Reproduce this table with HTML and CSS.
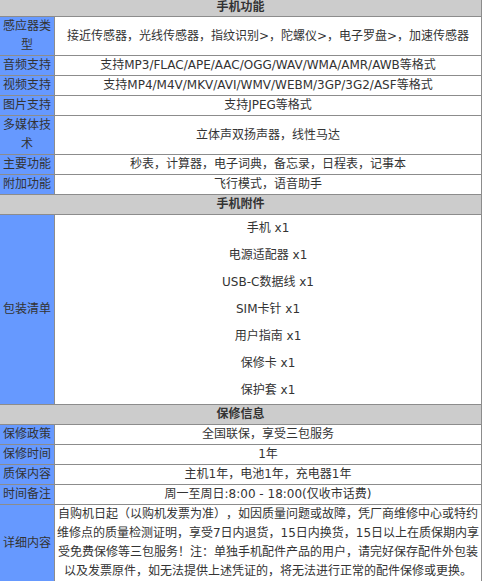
FILE: index.html
```html
<!DOCTYPE html>
<html lang="zh-CN">
<head>
<meta charset="utf-8">
<title>手机参数</title>
<link rel="stylesheet" href="styles.css">
</head>
<body>
<table class="spec">
  <colgroup><col class="c1"><col class="c2"></colgroup>
  <tr><th class="sec" colspan="2">手机功能</th></tr>
  <tr><td class="lbl">感应器类型</td><td class="val">接近传感器，光线传感器，指纹识别&gt;，陀螺仪&gt;，电子罗盘&gt;，加速传感器</td></tr>
  <tr><td class="lbl">音频支持</td><td class="val">支持MP3/FLAC/APE/AAC/OGG/WAV/WMA/AMR/AWB等格式</td></tr>
  <tr><td class="lbl">视频支持</td><td class="val">支持MP4/M4V/MKV/AVI/WMV/WEBM/3GP/3G2/ASF等格式</td></tr>
  <tr><td class="lbl">图片支持</td><td class="val">支持JPEG等格式</td></tr>
  <tr><td class="lbl">多媒体技术</td><td class="val">立体声双扬声器，线性马达</td></tr>
  <tr><td class="lbl">主要功能</td><td class="val">秒表，计算器，电子词典，备忘录，日程表，记事本</td></tr>
  <tr><td class="lbl">附加功能</td><td class="val">飞行模式，语音助手</td></tr>
  <tr><th class="sec" colspan="2">手机附件</th></tr>
  <tr><td class="lbl">包装清单</td><td class="val pack">
    <div class="item">手机 x1</div>
    <div class="item">电源适配器 x1</div>
    <div class="item">USB-C数据线 x1</div>
    <div class="item">SIM卡针 x1</div>
    <div class="item">用户指南 x1</div>
    <div class="item">保修卡 x1</div>
    <div class="item">保护套 x1</div>
  </td></tr>
  <tr><th class="sec" colspan="2">保修信息</th></tr>
  <tr><td class="lbl">保修政策</td><td class="val">全国联保，享受三包服务</td></tr>
  <tr><td class="lbl">保修时间</td><td class="val">1年</td></tr>
  <tr><td class="lbl">质保内容</td><td class="val">主机1年，电池1年，充电器1年</td></tr>
  <tr><td class="lbl">时间备注</td><td class="val">周一至周日:8:00 - 18:00(仅收市话费)</td></tr>
  <tr><td class="lbl">详细内容</td><td class="val detail">自购机日起（以购机发票为准），如因质量问题或故障，凭厂商维修中心或特约维修点的质量检测证明，享受7日内退货，15日内换货，15日以上在质保期内享受免费保修等三包服务！注：单独手机配件产品的用户，请完好保存配件外包装以及发票原件，如无法提供上述凭证的，将无法进行正常的配件保修或更换。</td></tr>
</table>
</body>
</html>
```

FILE: styles.css
```css
html, body {
  margin: 0;
  padding: 0;
  background: #fff;
  overflow: hidden;
}
.spec {
  border-collapse: collapse;
  table-layout: fixed;
  width: 483px;
  margin: -3px 0 0 -1px;
  font-family: "DejaVu Sans", "Noto Sans CJK SC", sans-serif;
  font-size: 12px;
  line-height: 19px;
  color: #333;
  text-spacing-trim: space-all;
}
.c1 { width: 55px; }
.spec th, .spec td {
  border: 1px solid #8c8c8c;
  padding: 0 2px;
  vertical-align: middle;
  text-align: center;
}
.spec tr:first-child th {
  line-height: 18px;
}
.sec {
  background: #cccccc;
  font-weight: bold;
  color: #333;
}
.lbl {
  background: #6699ff;
}
.val {
  background: #fff;
}
.spec .detail {
  padding: 0;
}
.pack {
  padding: 0;
}
.item {
  line-height: 27px;
}
```
